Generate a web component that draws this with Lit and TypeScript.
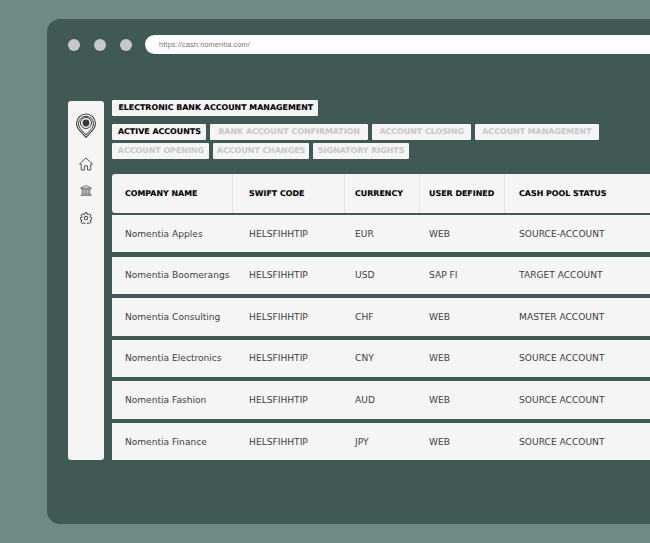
import { LitElement, html, css, svg } from "lit";
import { customElement } from "lit/decorators.js";

const rows = [
  ["Nomentia Apples", "HELSFIHHTIP", "EUR", "WEB", "SOURCE-ACCOUNT"],
  ["Nomentia Boomerangs", "HELSFIHHTIP", "USD", "SAP FI", "TARGET ACCOUNT"],
  ["Nomentia Consulting", "HELSFIHHTIP", "CHF", "WEB", "MASTER ACCOUNT"],
  ["Nomentia Electronics", "HELSFIHHTIP", "CNY", "WEB", "SOURCE ACCOUNT"],
  ["Nomentia Fashion", "HELSFIHHTIP", "AUD", "WEB", "SOURCE ACCOUNT"],
  ["Nomentia Finance", "HELSFIHHTIP", "JPY", "WEB", "SOURCE ACCOUNT"],
];
const heads = ["COMPANY NAME", "SWIFT CODE", "CURRENCY", "USER DEFINED", "CASH POOL STATUS"];
const tabs1 = ["BANK ACCOUNT CONFIRMATION", "ACCOUNT CLOSING", "ACCOUNT MANAGEMENT"];
const tabs2 = ["ACCOUNT OPENING", "ACCOUNT CHANGES", "SIGNATORY RIGHTS"];

const pin = svg`<svg class="pin" width="20" height="25" viewBox="0 0 20 25" fill="none" stroke="#3a3a3a">
  <path d="M10 24.4 L2.9 16.6 A9.4 9.4 0 1 1 17.1 16.6 Z" stroke-width="1.1" stroke-linejoin="round"/>
  <path d="M10 22 L4.3 15.6 A7.5 7.5 0 1 1 15.7 15.6 Z" stroke-width="1" stroke-linejoin="round"/>
  <circle cx="10" cy="10" r="5.5" stroke-width="1"/>
  <circle cx="10" cy="10" r="3.4" fill="#3a3a3a" stroke="none"/>
</svg>`;
const home = svg`<svg width="14" height="14" viewBox="0 0 15 14" fill="none" stroke="#4a4a4a" stroke-width="1" stroke-linejoin="round">
  <path d="M0.6 7 L7.5 0.6 L14.4 7 L12.6 7 L12.6 13.4 L9.2 13.4 L9.2 9 L5.8 9 L5.8 13.4 L2.4 13.4 L2.4 7 Z"/>
</svg>`;
const bank = svg`<svg width="12" height="11" viewBox="0 0 13 12" fill="none" stroke="#555" stroke-width="0.8">
  <path d="M0.8 3.2 L6.5 0.5 L12.2 3.2 Z M1.2 3.2 V4.4 H11.8 V3.2 M0.6 11.4 H12.4 M1.2 10 H11.8 V11.4 M2.4 4.4 V10 M4 4.4 V10 M5.7 4.4 V10 M7.3 4.4 V10 M9 4.4 V10 M10.6 4.4 V10"/>
</svg>`;
const gear = svg`<svg width="12" height="12" viewBox="0 0 24 24" fill="none" stroke="#3a3a3a" stroke-width="2" stroke-linejoin="round">
  <circle cx="12" cy="12" r="3.6"/>
  <path d="M10 1.5h4l.6 3.1 1.9.8 2.6-1.8 2.8 2.8-1.8 2.6.8 1.9 3.1.6v4l-3.1.6-.8 1.9 1.8 2.6-2.8 2.8-2.6-1.8-1.9.8-.6 3.1h-4l-.6-3.1-1.9-.8-2.6 1.8-2.8-2.8 1.8-2.6-.8-1.9-3.1-.6v-4l3.1-.6.8-1.9-1.8-2.6 2.8-2.8 2.6 1.8 1.9-.8z"/>
</svg>`;

@customElement("app-root")
export class AppRoot extends LitElement {
  static styles = css`
    :host {
      display: block; width: 650px; height: 543px; overflow: hidden;
      background: #6f8a85; font-family: "DejaVu Sans", "Liberation Sans", sans-serif;
      padding: 19px 0 19px 47px; box-sizing: border-box;
    }
    .window {
      width: 640px; height: 505px; background: #405955; border-radius: 13px;
      padding: 16px 0 0 21px; box-sizing: border-box; overflow: hidden;
    }
    .top { display: flex; align-items: center; height: 19px; }
    .dot { width: 12px; height: 12px; border-radius: 50%; background: #c8c8c8; margin-right: 14px; }
    .url {
      margin-left: -1px; width: 520px; height: 19.5px; border-radius: 10px 0 0 10px; background: #fff;
      font-family: "Liberation Sans", sans-serif; font-size: 7.4px; color: #777; line-height: 19.5px;
      padding-left: 14px; box-sizing: border-box; letter-spacing: .1px;
    }
    .main { display: flex; gap: 8px; margin-top: 46px; }
    .side {
      width: 36px; height: 359px; flex: none; background: #f5f5f5; border-radius: 3px; margin-top: 1px;
      display: flex; flex-direction: column; align-items: center; padding-top: 12px; box-sizing: border-box;
    }
    .side svg { display: block; flex: none; }
    .side svg:nth-child(2) { margin-top: 18.5px; }
    .side svg:nth-child(3) { margin-top: 14.5px; }
    .side svg:nth-child(4) { margin-top: 16px; }
    .content { flex: none; width: 560px; margin-left: .4px; }
    .chip {
      display: inline-block; height: 16px; line-height: 16px; background: #f5f5f5; border-radius: 1px;
      font-size: 7.9px; font-weight: 700; padding: 0 6px; color: #000; white-space: nowrap;
      -webkit-text-stroke: .12px currentColor;
    }
    .title { width: 206px; box-sizing: border-box; display: block; }
    .tabs { display: flex; gap: 3.5px; margin-top: 3px; }
    .tabs.first { margin-top: 8px; }
    .tabs:not(.first) .chip { height: 15.5px; line-height: 15.5px; }
    .tab { color: #c9c9c9; box-sizing: border-box; text-align: center; padding: 0; }
    .tab.on { color: #000; }
    .table { margin-top: 15.5px; width: 560px; }
    .row {
      display: grid; grid-template-columns: 119.2px 112.5px 75px 85px 1fr; background: #f5f5f5;
      height: 37.4px; align-items: center; margin-bottom: 4.2px;
    }
    .row.head { height: 39px; margin-bottom: 2px; border-radius: 3px 0 0 3px; align-items: stretch; }
    .c { padding-left: 12.5px; font-size: 9.1px; color: #3f3f3f; white-space: nowrap; }
    .c:nth-child(2) { padding-left: 17.5px; }
    .c:nth-child(3) { padding-left: 11px; }
    .c:nth-child(4) { padding-left: 10px; }
    .c:nth-child(5) { padding-left: 15px; }
    .head .c {
      font-size: 7.9px; font-weight: 700; color: #000; line-height: 39px;
      border-left: 1px solid #e4e4e4; -webkit-text-stroke: .12px currentColor;
    }
    .head .c:first-child { border-left: 0; }
    .head .c:nth-child(2) { padding-left: 16.5px; }
    .head .c:nth-child(3) { padding-left: 10px; }
    .head .c:nth-child(4) { padding-left: 9px; }
    .head .c:nth-child(5) { padding-left: 14px; }
  `;

  render() {
    const w1 = [158.5, 99.5, 124];
    const w2 = [97, 96.5, 96.5];
    return html`<div class="window">
      <div class="top">
        <span class="dot"></span><span class="dot"></span><span class="dot"></span>
        <div class="url">https://cash.nomentia.com/</div>
      </div>
      <div class="main">
        <nav class="side">${pin}${home}${bank}${gear}</nav>
        <div class="content">
          <div class="chip title">ELECTRONIC BANK ACCOUNT MANAGEMENT</div>
          <div class="tabs first">
            <span class="chip tab on" style="width:94px">ACTIVE ACCOUNTS</span>
            ${tabs1.map((t, i) => html`<span class="chip tab" style="width:${w1[i]}px">${t}</span>`)}
          </div>
          <div class="tabs">
            ${tabs2.map((t, i) => html`<span class="chip tab" style="width:${w2[i]}px">${t}</span>`)}
          </div>
          <div class="table">
            <div class="row head">${heads.map((h) => html`<div class="c">${h}</div>`)}</div>
            ${rows.map((r) => html`<div class="row">${r.map((c) => html`<div class="c">${c}</div>`)}</div>`)}
          </div>
        </div>
      </div>
    </div>`;
  }
}
